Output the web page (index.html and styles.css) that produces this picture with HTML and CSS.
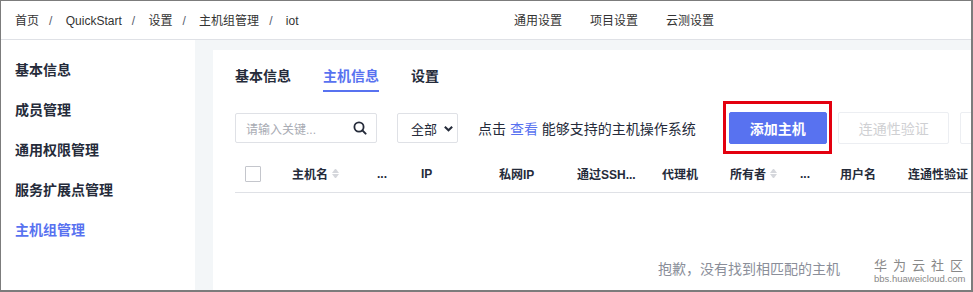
FILE: index.html
```html
<!DOCTYPE html>
<html>
  <head>
    <meta charset="UTF-8">
    <title>主机组管理</title>
    <link rel="stylesheet" href="styles.css">
  </head>

  <body>
    <div class="frame">
      <div class="header">
        <div class="crumbs">
          <span>首页</span><span class="crumb-sep">/</span>
          <span>QuickStart</span><span class="crumb-sep">/</span>
          <span>设置</span><span class="crumb-sep">/</span>
          <span>主机组管理</span><span class="crumb-sep">/</span>
          <span>iot</span>
        </div>
        <div class="top-nav">
          <span>通用设置</span>
          <span>项目设置</span>
          <span>云测设置</span>
        </div>
      </div>

      <div class="body">
        <div class="side">
          <div class="side-item">基本信息</div>
          <div class="side-item">成员管理</div>
          <div class="side-item">通用权限管理</div>
          <div class="side-item">服务扩展点管理</div>
          <div class="side-item side-item-active">主机组管理</div>
        </div>

        <div class="main">
          <div class="card">
            <div class="tabs">
              <span class="tab">基本信息</span>
              <span class="tab tab-active">主机信息</span>
              <span class="tab">设置</span>
            </div>

            <div class="toolbar">
              <div class="search">
                <span class="search-placeholder">请输入关键...</span>
                <svg class="search-icon" width="14" height="14" viewBox="0 0 14 14">
                  <circle cx="6" cy="6" r="4.6" fill="none" stroke="#252b3a" stroke-width="1.8"/>
                  <line x1="9.4" y1="9.4" x2="12.6" y2="12.6" stroke="#252b3a" stroke-width="2" stroke-linecap="round"/>
                </svg>
              </div>
              <div class="select">
                <span>全部</span>
                <svg width="11" height="11" viewBox="0 0 12 12">
                  <polyline points="2,4 6,8 10,4" fill="none" stroke="#252b3a" stroke-width="2.2"/>
                </svg>
              </div>
              <div class="hint">点击 <a class="hint-link">查看</a> 能够支持的主机操作系统</div>
              <span class="btn-mark"><button class="btn btn-primary">添加主机</button></span>
              <button class="btn btn-disabled">连通性验证</button>
              <button class="btn btn-disabled"></button>
            </div>

            <div class="thead">
              <div class="th"><span class="checkbox"></span></div>
              <div class="th">主机名<span class="sort"></span></div>
              <div class="th">...</div>
              <div class="th">IP</div>
              <div class="th">私网IP</div>
              <div class="th">通过SSH...</div>
              <div class="th">代理机</div>
              <div class="th">所有者<span class="sort"></span></div>
              <div class="th">...</div>
              <div class="th">用户名</div>
              <div class="th">连通性验证</div>
            </div>

            <div class="empty">抱歉，没有找到相匹配的主机</div>
          </div>
        </div>
      </div>

      <div class="watermark">
        <div class="watermark-title">华为云社区</div>
        <div class="watermark-url">bbs.huaweicloud.com</div>
      </div>
    </div>
  </body>
</html>
```

FILE: styles.css
```css
* {
  box-sizing: border-box;
}

body {
  margin: 0;
  font-family: "Liberation Sans", "Noto Sans CJK SC", sans-serif;
  color: #252b3a;
}

.frame {
  position: relative;
  width: 973px;
  height: 292px;
  border: 1px solid #7c7c7c;
  border-right-width: 2px;
  border-bottom-width: 2px;
  overflow: hidden;
  display: flex;
  flex-direction: column;
}

.header {
  height: 39px;
  flex: none;
  display: grid;
  grid-template-columns: 513px auto;
  align-items: center;
  border-bottom: 1px solid #dfe1e6;
  font-size: 12px;
  line-height: 16px;
  color: #333;
}

.crumbs {
  padding-left: 14px;
  padding-top: 1px;
}

.crumb-sep {
  margin: 0 10px;
  color: #575d6c;
}

.top-nav {
  display: flex;
  gap: 28px;
  padding-top: 1px;
}

.body {
  flex: 1;
  display: flex;
  background: #f3f6f8;
  min-height: 0;
}

.side {
  width: 194px;
  flex: none;
  background: #fff;
  padding-top: 10px;
}

.side-item {
  height: 40px;
  line-height: 40px;
  padding-left: 14px;
  font-size: 14px;
  font-weight: bold;
  color: #252b3a;
}

.side-item-active {
  color: #5872f0;
}

.main {
  flex: 1;
  padding: 10px 0 0 18px;
  min-width: 0;
}

.card {
  height: 100%;
  background: #fff;
  padding-left: 22px;
  overflow: hidden;
}

.tabs {
  display: flex;
  gap: 32px;
  padding-top: 16px;
}

.tab {
  font-size: 14px;
  font-weight: bold;
  line-height: 20px;
  padding-bottom: 4px;
  border-bottom: 2px solid transparent;
}

.tab-active {
  color: #5872f0;
  border-bottom-color: #5872f0;
}

.toolbar {
  display: flex;
  align-items: center;
  height: 32px;
  margin-top: 20px;
  white-space: nowrap;
}

.search {
  width: 142px;
  height: 30px;
  flex: none;
  border: 1px solid #dfe1e6;
  border-radius: 2px;
  display: flex;
  align-items: center;
  justify-content: space-between;
  padding: 0 9px 0 10px;
}

.search-placeholder {
  font-size: 12px;
  color: #a8abb3;
}

.select {
  width: 61px;
  height: 30px;
  flex: none;
  margin-left: 20px;
  border: 1px solid #dfe1e6;
  border-radius: 2px;
  display: flex;
  align-items: center;
  gap: 6px;
  padding-left: 13px;
  font-size: 13px;
}

.hint {
  margin-left: 20px;
  font-size: 14px;
}

.hint-link {
  color: #5872f0;
}

.btn-mark {
  position: relative;
  margin-left: 33px;
  display: flex;
}

.btn-mark::after {
  content: "";
  position: absolute;
  top: -11px;
  left: -6px;
  right: -5px;
  bottom: -10px;
  border: 3px solid #e3000f;
}

.btn {
  height: 32px;
  padding: 0 20px;
  border-radius: 2px;
  font-family: inherit;
  font-size: 14px;
  flex: none;
}

.btn-primary {
  width: 98px;
  background: #5872f0;
  border: 1px solid #5872f0;
  color: #fff;
  font-weight: bold;
}

.btn-disabled {
  width: 111px;
  margin-left: 11px;
  background: #fff;
  border: 1px solid #eceef2;
  color: #cfd0d3;
}

.thead {
  display: grid;
  grid-template-columns: 47px 85px 44px 78px 78px 85px 68px 70px 40px 68px 90px;
  height: 38px;
  margin-top: 11px;
  border-bottom: 1px solid #dfe1e6;
  align-items: center;
  font-size: 12px;
  font-weight: bold;
  white-space: nowrap;
}

.th {
  padding-left: 10px;
  display: flex;
  align-items: center;
}

.checkbox {
  width: 16px;
  height: 16px;
  border: 1px solid #c4c6cc;
  border-radius: 1px;
}

.sort {
  margin-left: 4px;
  width: 7px;
  height: 12px;
  display: flex;
  flex-direction: column;
  justify-content: center;
  gap: 1px;
}

.sort::before,
.sort::after {
  content: "";
  border-left: 3.5px solid transparent;
  border-right: 3.5px solid transparent;
}

.sort::before {
  border-bottom: 4px solid #d5d7dc;
}

.sort::after {
  border-top: 4px solid #d5d7dc;
}

.empty {
  margin-top: 66px;
  padding-left: 423px;
  font-size: 14px;
  line-height: 20px;
  color: #8a8e99;
}

.watermark {
  position: absolute;
  right: 9px;
  bottom: 6px;
  width: 88px;
  text-align: center;
  white-space: nowrap;
  background: #fff;
  color: #888;
}

.watermark-title {
  font-size: 13px;
  line-height: 15px;
  letter-spacing: 6px;
  margin-right: -6px;
}

.watermark-url {
  font-size: 9.5px;
  line-height: 11px;
}
```
